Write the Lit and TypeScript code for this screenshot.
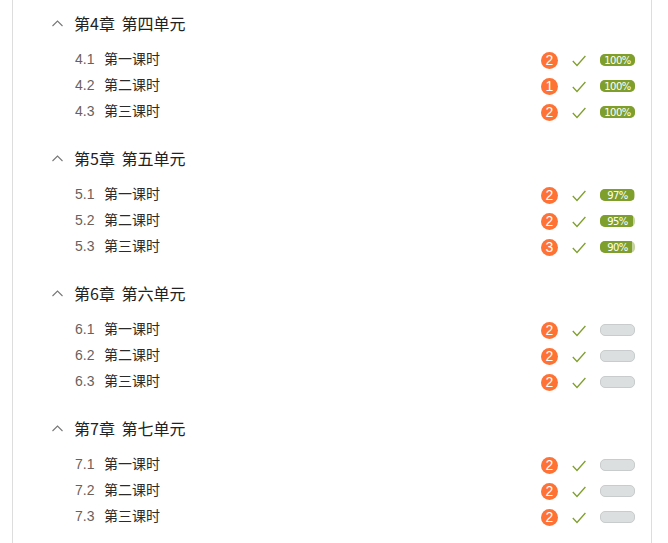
import { LitElement, html, css, svg } from "lit";
import { customElement } from "lit/decorators.js";

type Row = { badge: number; pct: number | null };
const CN = ["四", "五", "六", "七"];
const LESSONS = ["第一课时", "第二课时", "第三课时"];
const CHAPTERS: { n: number; rows: Row[] }[] = [
  { n: 4, rows: [{ badge: 2, pct: 100 }, { badge: 1, pct: 100 }, { badge: 2, pct: 100 }] },
  { n: 5, rows: [{ badge: 2, pct: 97 }, { badge: 2, pct: 95 }, { badge: 3, pct: 90 }] },
  { n: 6, rows: [{ badge: 2, pct: null }, { badge: 2, pct: null }, { badge: 2, pct: null }] },
  { n: 7, rows: [{ badge: 2, pct: null }, { badge: 2, pct: null }, { badge: 2, pct: null }] },
];

@customElement("app-root")
export class AppRoot extends LitElement {
  static styles = css`
    :host {
      display: block;
      height: 543px;
      overflow: hidden;
      font-family: "Noto Sans CJK SC", "Liberation Sans", sans-serif;
      background: #fff;
    }
    .panel {
      box-sizing: border-box;
      width: 640px;
      height: 543px;
      margin-left: 12px;
      border-left: 1px solid #ddd;
      border-right: 1px solid #ddd;
      padding-top: 9px;
    }
    .chapter { height: 135px; }
    .head {
      height: 27px;
      display: flex;
      align-items: center;
      padding-left: 38px;
      font-size: 16px;
      word-spacing: 3px;
      color: #222;
    }
    .caret { width: 13px; height: 8px; margin-right: 10px; }
    .rows { margin-top: 10px; }
    .row {
      height: 26px;
      display: flex;
      align-items: center;
      padding-left: 62px;
      padding-right: 16px;
      font-size: 14px;
      color: #2b2b2b;
    }
    .num {
      width: 29px;
      font-family: "Liberation Sans", sans-serif;
      font-size: 14px;
      color: #6b5f5c;
    }
    .title { flex: 1; padding-bottom: 2px; }
    .side { display: flex; align-items: center; padding-top: 2px; }
    .badge {
      width: 17px;
      height: 17px;
      border-radius: 50%;
      background: #ff7236;
      color: #fff;
      font-family: "Liberation Sans", sans-serif;
      font-size: 14px;
      display: flex;
      align-items: center;
      justify-content: center;
    }
    .check { width: 14px; height: 12px; margin-left: 14px; margin-top: 2px; }
    .bar {
      box-sizing: border-box;
      position: relative;
      width: 35px;
      height: 12px;
      margin-left: 14px;
      border-radius: 5px;
      background: #dcdfdf;
      border: 1px solid #c9cccc;
      overflow: hidden;
    }
    .bar.on { border: none; background: #c4d2a0; }
    .fill { position: absolute; left: 0; top: 0; bottom: 0; background: #7f9f2d; }
    .label {
      position: absolute;
      inset: 0;
      display: flex;
      align-items: center;
      justify-content: center;
      color: #fff;
      font-family: "DejaVu Sans", sans-serif;
      font-size: 10px;
      letter-spacing: -0.5px;
    }
  `;

  private caret() {
    return html`<svg class="caret" viewBox="0 0 13 8">
      ${svg`<path d="M1.5 7 L6.5 2 L11.5 7" fill="none" stroke="#777" stroke-width="1.1"/>`}
    </svg>`;
  }

  private check() {
    return html`<svg class="check" viewBox="0 0 14 12">
      ${svg`<path d="M0.8 6 L5 10.5 L13.4 1" fill="none" stroke="#7f9f2d" stroke-width="1.3"/>`}
    </svg>`;
  }

  render() {
    return html`<div class="panel">
      ${CHAPTERS.map(
        (c, i) => html`<section class="chapter">
          <div class="head">${this.caret()}<span>第${c.n}章 第${CN[i]}单元</span></div>
          <div class="rows">
            ${c.rows.map(
              (r, j) => html`<div class="row">
                <span class="num">${c.n}.${j + 1}</span>
                <span class="title">${LESSONS[j]}</span>
                <div class="side">
                  <span class="badge">${r.badge}</span>
                  ${this.check()}
                  ${r.pct === null
                    ? html`<div class="bar"></div>`
                    : html`<div class="bar on">
                        <div class="fill" style="width:${r.pct}%"></div>
                        <div class="label">${r.pct}%</div>
                      </div>`}
                </div>
              </div>`
            )}
          </div>
        </section>`
      )}
    </div>`;
  }
}
